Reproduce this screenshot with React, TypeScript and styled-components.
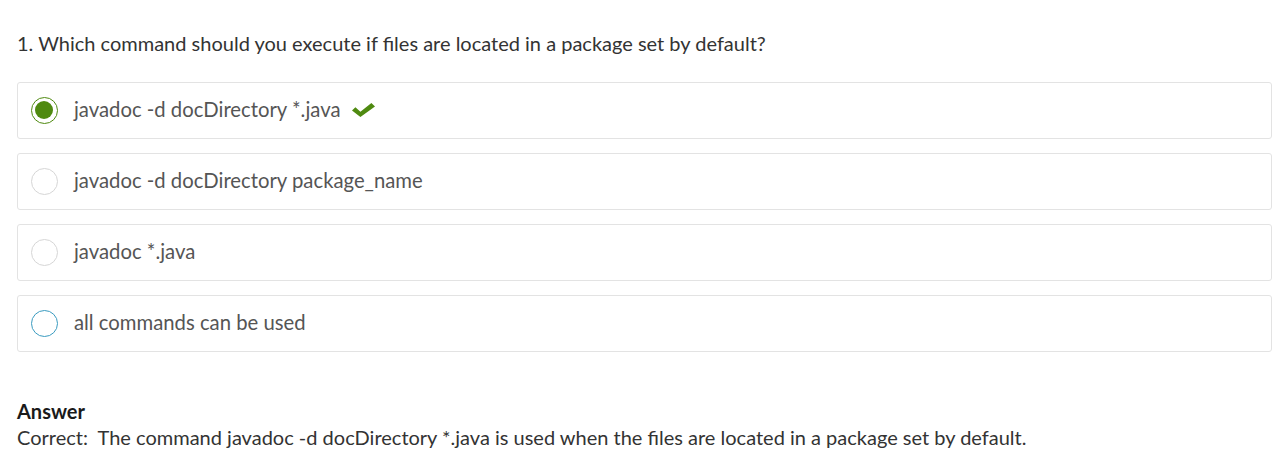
import styled, { createGlobalStyle } from "styled-components";

const GlobalStyle = createGlobalStyle`
  body {
    margin: 0;
    background: #ffffff;
    font-family: "Lato", "Liberation Sans", sans-serif;
  }
`;

const Page = styled.div`
  padding: 28px 6px 0 17px;
`;

const Question = styled.h3`
  margin: 0 0 24px 0;
  font-size: 20px;
  font-weight: 400;
  color: #333333;
  line-height: 30px;
`;

const Options = styled.div`
  display: flex;
  flex-direction: column;
  gap: 14px;
`;

const Option = styled.div`
  display: flex;
  align-items: center;
  height: 57px;
  box-sizing: border-box;
  padding-left: 13px;
  border: 1px solid #e3e3e3;
  border-radius: 3px;
`;

interface IRadio {
  state: "checked" | "focus" | "empty";
}

const Radio = styled.span<IRadio>`
  position: relative;
  flex: none;
  width: 27px;
  height: 27px;
  box-sizing: border-box;
  border-radius: 50%;
  border: ${(props) =>
    props.state === "checked"
      ? "1.5px solid #4f8a10"
      : props.state === "focus"
      ? "1.5px solid #3a9bc0"
      : "1px solid #d6d6d6"};
  &::after {
    content: "";
    display: ${(props) => (props.state === "checked" ? "block" : "none")};
    position: absolute;
    top: 3px;
    left: 3px;
    width: 18px;
    height: 18px;
    border-radius: 50%;
    background: #4f8a10;
  }
`;

const Label = styled.span`
  margin-left: 16px;
  padding-bottom: 4px;
  font-size: 20.3px;
  color: #555555;
`;

const Check = styled.svg`
  margin-left: 12px;
  margin-bottom: 2px;
  width: 23px;
  height: 14px;
`;

const AnswerBlock = styled.div`
  margin-top: 46px;
  font-size: 20px;
  line-height: 26px;
  color: #333333;
`;

const AnswerTitle = styled.div`
  font-weight: 700;
  color: #1a1a1a;
`;

const options: { text: string; state: IRadio["state"]; correct?: boolean }[] = [
  { text: "javadoc -d docDirectory *.java", state: "checked", correct: true },
  { text: "javadoc -d docDirectory package_name", state: "empty" },
  { text: "javadoc *.java", state: "empty" },
  { text: "all commands can be used", state: "focus" },
];

function App() {
  return (
    <>
      <GlobalStyle />
      <Page>
        <Question>
          1. Which command should you execute if files are located in a package set by default?
        </Question>
        <Options>
          {options.map((opt) => (
            <Option key={opt.text}>
              <Radio state={opt.state} />
              <Label>{opt.text}</Label>
              {opt.correct && (
                <Check viewBox="0 0 23 14">
                  <path
                    d="M0 7.6 L3.4 4.2 L8.4 8.8 L19.4 0 L23 3.6 L8.4 14 Z"
                    fill="#4f8a10"
                  />
                </Check>
              )}
            </Option>
          ))}
        </Options>
        <AnswerBlock>
          <AnswerTitle>Answer</AnswerTitle>
          <div>
            Correct:&nbsp; The command javadoc -d docDirectory *.java is used when the files are located in a package set by default.
          </div>
        </AnswerBlock>
      </Page>
    </>
  );
}

export default App;
